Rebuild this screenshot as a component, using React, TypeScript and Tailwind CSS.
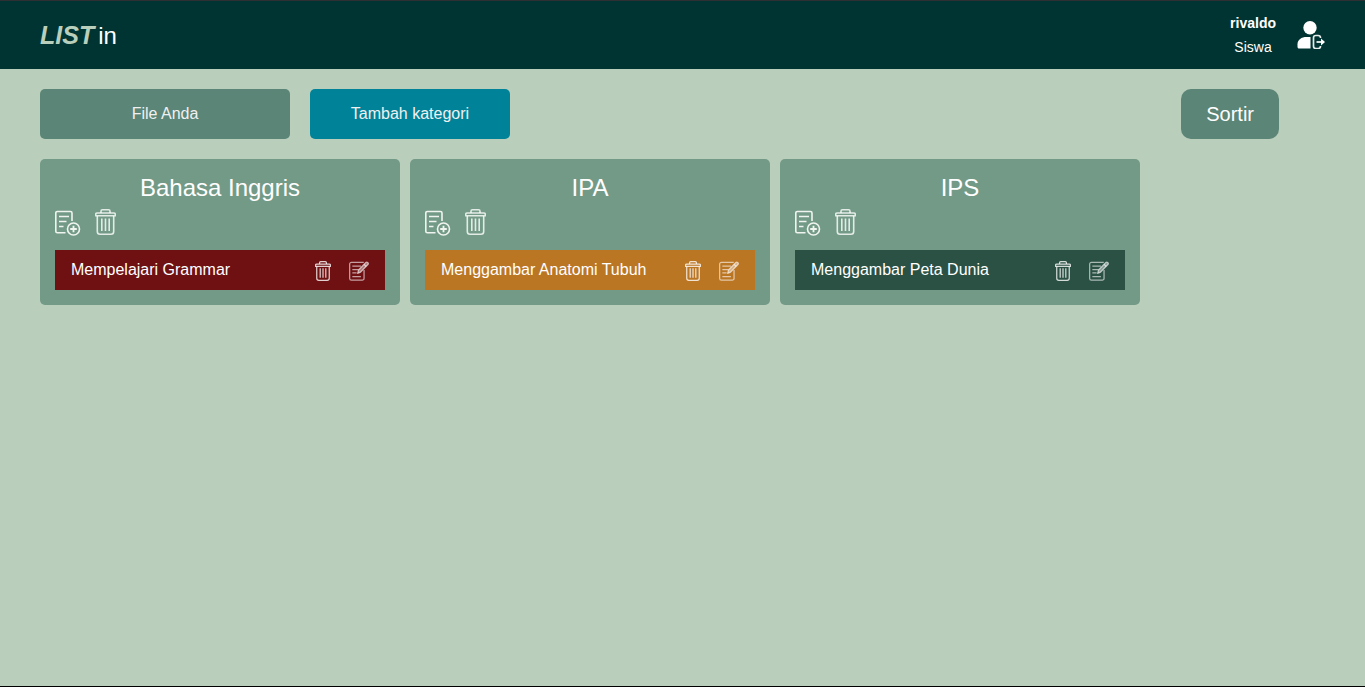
import React from "react";

type Category = { title: string; task: string; color: string };

const categories: Category[] = [
  { title: "Bahasa Inggris", task: "Mempelajari Grammar", color: "bg-[#6f1113]" },
  { title: "IPA", task: "Menggambar Anatomi Tubuh", color: "bg-[#bb7624]" },
  { title: "IPS", task: "Menggambar Peta Dunia", color: "bg-[#2b5145]" },
];

function UserLogoutIcon() {
  return (
    <svg viewBox="0 0 28 28" className="size-7" fill="none" aria-hidden="true">
      <circle cx="13" cy="6.700" r="6.700" fill="#fff" />
      <path d="M13.500 16v11.600H2.200C1 27.600.5 27 .5 25.800v-2.600C.5 18.700 4.500 16 9.500 16z" fill="#fff" />
      <path d="M23.500 17v-.2c0-1.500-.8-2.300-2.300-2.300h-2.400c-1.500 0-2.300.8-2.300 2.300v8.400c0 1.500.8 2.300 2.300 2.300h2.400c1.500 0 2.300-.8 2.300-2.300V25" stroke="#e4ebea" strokeWidth="1.700" />
      <path d="M19.500 21H26" stroke="#fff" strokeWidth="1.700" />
      <path d="M24 17.600l4 3.400-4 3.400z" fill="#fff" />
    </svg>
  );
}

function AddNoteIcon() {
  return (
    <svg viewBox="0 0 26 26" className="h-[26px] w-[26px]" fill="none" stroke="#f0f4f0" strokeWidth="1.600" aria-hidden="true">
      <path d="M10.500 22.800H2.300A1.500 1.500 0 0 1 .8 21.300V3A1.500 1.500 0 0 1 2.300 1.500h13.200A1.500 1.500 0 0 1 17 3v8" />
      <path d="M4 6.500h10M4 11.500h7.500M4 16.500h4.500" />
      <circle cx="18.500" cy="19" r="6" />
      <path d="M15.200 19h6.600M18.500 15.700v6.600" strokeWidth="1.800" />
    </svg>
  );
}

function TrashIcon({ className }: { className: string }) {
  return (
    <svg viewBox="0 0 21 26" className={className} fill="none" stroke="#fff" strokeOpacity="0.800" strokeWidth="1.600" strokeLinejoin="round" aria-hidden="true">
      <path d="M6 3.900V2.200C6 1.300 6.500.8 7.400.8h6.200c.9 0 1.400.5 1.400 1.400v1.700" />
      <path d="M2.200 4h16.600c1 0 1.500.5 1.500 1.300v1.500H.7V5.300C.7 4.500 1.200 4 2.200 4z" />
      <path d="M2.300 7v15.500c0 1.800.9 2.700 2.700 2.700h11c1.800 0 2.700-.9 2.700-2.700V7" />
      <path d="M6.800 9.500v12.500M10.500 9.500v12.500M14.200 9.500v12.500" />
    </svg>
  );
}

function EditIcon() {
  return (
    <svg viewBox="0 0 21 21" className="size-5" fill="none" stroke="#fff" strokeOpacity="0.600" strokeWidth="1.300" strokeLinejoin="round" aria-hidden="true">
      <path d="M15.500 1.500h-13a1.800 1.800 0 0 0-1.800 1.800v15a1.800 1.800 0 0 0 1.800 1.800H14a1.800 1.800 0 0 0 1.800-1.800V9.500" />
      <path d="M3.500 5.300h9M3.500 9h6.500M3.500 12.500h4.500M3.500 16.300h9" />
      <path d="M9 13l1-3.500 7.700-8c.6-.6 1.200-.6 1.800 0l.4.400c.6.600.6 1.200 0 1.800l-7.700 8z" fill="#fff" fillOpacity="0.450" />
      <path d="M15.800 3.500l2.300 2.300" />
    </svg>
  );
}

function CategoryCard({ title, task, color }: Category) {
  return (
    <section className="w-[360px] rounded-[5px] bg-[#739a87] p-[15px] text-white">
      <h2 className="text-center text-2xl leading-7">{title}</h2>
      <div className="mt-1.5 flex gap-[14px]">
        <button type="button" aria-label={`Tambah tugas ${title}`} className="pt-0.5">
          <AddNoteIcon />
        </button>
        <button type="button" aria-label={`Hapus kategori ${title}`} className="pb-px">
          <TrashIcon className="h-[26px] w-[21px]" />
        </button>
      </div>
      <div className={`mt-3.5 flex h-10 items-center px-4 ${color}`}>
        <span className="grow text-base leading-6">{task}</span>
        <div className="flex items-center gap-[18px] pt-0.5">
          <button type="button" aria-label={`Hapus ${task}`}>
            <TrashIcon className="h-5 w-4" />
          </button>
          <button type="button" aria-label={`Ubah ${task}`}>
            <EditIcon />
          </button>
        </div>
      </div>
    </section>
  );
}

export default function App() {
  return (
    <div className="flex min-h-screen flex-col border-b border-black bg-[#bacfbb] font-['Liberation_Sans',Arial,sans-serif]">
      <header className="flex items-center justify-between border-t border-[#2e2f33] bg-[#003432] px-10 py-2.5 text-white">
        <a href="#" className="flex items-baseline gap-1 pt-0.5">
          <span className="text-[25px] font-bold italic text-[#bacfbb]">LIST</span>
          <span className="text-2xl">in</span>
        </a>
        <div className="flex items-center gap-[21px]">
          <div className="text-center text-sm leading-6">
            <p className="font-bold">rivaldo</p>
            <p>Siswa</p>
          </div>
          <button type="button" aria-label="Keluar">
            <UserLogoutIcon />
          </button>
        </div>
      </header>
      <main className="px-10 py-5">
        <div className="mr-[46px] flex gap-5">
          <button type="button" className="h-[50px] w-[250px] rounded-[5px] bg-[#5b8576] text-base text-[#f0f0f0]">File Anda</button>
          <button type="button" className="h-[50px] w-[200px] rounded-[5px] bg-[#008399] text-base text-[#f0f0f0]">Tambah kategori</button>
          <button type="button" className="ml-auto h-[50px] rounded-[10px] bg-[#5b8576] px-[25px] text-xl text-white">Sortir</button>
        </div>
        <div className="mt-5 flex flex-wrap gap-2.5">
          {categories.map((c) => (
            <CategoryCard key={c.title} {...c} />
          ))}
        </div>
      </main>
    </div>
  );
}
